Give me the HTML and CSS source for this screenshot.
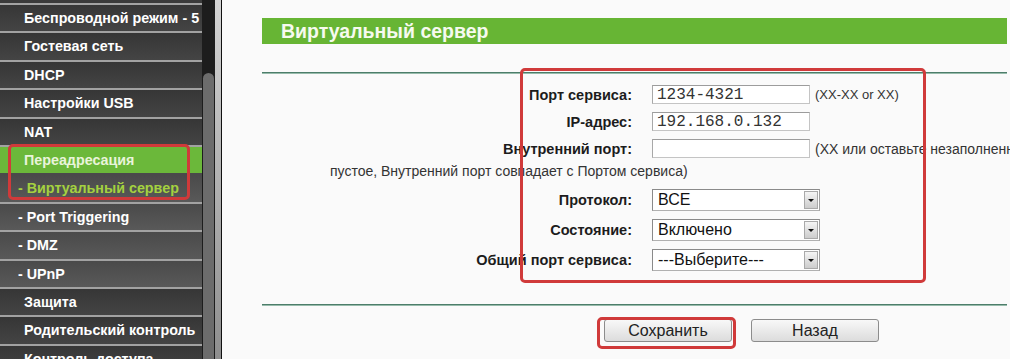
FILE: index.html
```html
<!DOCTYPE html>
<html lang="ru">
<head>
<meta charset="utf-8">
<title>Виртуальный сервер</title>
<link rel="stylesheet" href="styles.css">
</head>
<body>
<div class="page">
  <nav class="sidebar">
    <ul class="menu">
      <li class="item">Беспроводной режим - 5 ГГц</li>
      <li class="item">Гостевая сеть</li>
      <li class="item">DHCP</li>
      <li class="item">Настройки USB</li>
      <li class="item">NAT</li>
      <li class="item parent-active">Переадресация</li>
      <li class="item sub current">- Виртуальный сервер</li>
      <li class="item sub">- Port Triggering</li>
      <li class="item sub">- DMZ</li>
      <li class="item sub">- UPnP</li>
      <li class="item">Защита</li>
      <li class="item">Родительский контроль</li>
      <li class="item">Контроль доступа</li>
    </ul>
    <div class="mark mark-menu"></div>
  </nav>
  <div class="scrollbar"><div class="thumb"></div></div>
  <div class="frame-edge"></div>
  <main class="content">
    <h1 class="title-bar">Виртуальный сервер</h1>
    <div class="rule"></div>
    <form class="form">
      <div class="row">
        <label class="label">Порт сервиса:</label>
        <input class="text" type="text" value="1234-4321">
        <span class="hint hint-latin">(XX-XX or XX)</span>
      </div>
      <div class="row">
        <label class="label">IP-адрес:</label>
        <input class="text" type="text" value="192.168.0.132">
      </div>
      <div class="row">
        <label class="label">Внутренний порт:</label>
        <input class="text" type="text" value="">
        <span class="hint">(XX или оставьте незаполненным поле</span>
      </div>
      <div class="wrap-line">пустое, Внутренний порт совпадает с Портом сервиса)</div>
      <div class="row select-row first">
        <label class="label">Протокол:</label>
        <div class="select"><span class="value">ВСЕ</span><span class="arrow"></span></div>
      </div>
      <div class="row select-row">
        <label class="label">Состояние:</label>
        <div class="select"><span class="value">Включено</span><span class="arrow"></span></div>
      </div>
      <div class="row select-row">
        <label class="label">Общий порт сервиса:</label>
        <div class="select"><span class="value">---Выберите---</span><span class="arrow"></span></div>
      </div>
      <div class="mark mark-form"></div>
    </form>
    <div class="rule rule-bottom"></div>
    <div class="buttons">
      <span class="btn-wrap marked"><button class="btn" type="button">Сохранить</button></span>
      <button class="btn" type="button">Назад</button>
    </div>
  </main>
</div>
</body>
</html>
```

FILE: styles.css
```css
* { box-sizing: border-box; }
html, body { margin: 0; padding: 0; }
body {
  width: 1010px;
  height: 359px;
  overflow: hidden;
  background: #fafafa;
  font-family: "Liberation Sans", Arial, sans-serif;
}
.page {
  display: flex;
  height: 359px;
}

/* sidebar */
.sidebar {
  position: relative;
  width: 202px;
  flex: none;
  background: #3a3a3a;
  padding-top: 3px;
  overflow: hidden;
}
.menu {
  list-style: none;
  margin: 0;
  padding: 0;
}
.item {
  height: 28.42px;
  border-top: 2px solid #a2a2a2;
  background: linear-gradient(#363636, #444444);
  color: #ffffff;
  font-weight: bold;
  font-size: 14.3px;
  line-height: 26.42px;
  padding-left: 24px;
  white-space: nowrap;
  overflow: hidden;
}
.item.sub {
  padding-left: 18px;
  background: linear-gradient(#4a4a4a, #595959);
}
.item.parent-active {
  background: #6bb83a;
  color: #e9f4da;
}
.item.current {
  color: #a4d13f;
  border-top-color: #4a4a4a;
}
.mark {
  position: absolute;
  border: 3px solid #d03a3a;
  border-radius: 5px;
  pointer-events: none;
}
.mark-menu {
  left: 8px;
  top: 144px;
  width: 182px;
  height: 56px;
}

/* scrollbar + frame edge */
.scrollbar {
  width: 13px;
  flex: none;
  background: #1d1d1d;
  padding-top: 73px;
  padding-left: 1px;
  padding-right: 1px;
}
.thumb {
  height: 100%;
  background: #6c6c6c;
  border-radius: 6px 6px 0 0;
}
.frame-edge {
  width: 7px;
  flex: none;
  background: linear-gradient(#d4d4d4, #8e8e8e);
  border-right: 1px solid #111;
}

/* content */
.content {
  flex: 1;
  min-width: 0;
  overflow: hidden;
  padding: 18px 3px 0 40px;
  background: #fafafa;
}
.title-bar {
  margin: 0;
  height: 26px;
  line-height: 26px;
  background: #67b534;
  color: #f6faef;
  font-size: 19.5px;
  font-weight: bold;
  padding-left: 19px;
}
.rule {
  height: 2px;
  margin-top: 28px;
  border-top: 1px solid #4d7d6a;
  border-bottom: 1px solid #97bbab;
}
.rule-bottom {
  margin-top: 29px;
}

.form {
  position: relative;
  margin-top: 7px;
}
.row {
  display: flex;
  align-items: center;
  height: 27px;
  white-space: nowrap;
}
.label {
  width: 370px;
  flex: none;
  text-align: right;
  margin-right: 20px;
  font-size: 14.5px;
  font-weight: bold;
  color: #1c1c1c;
}
.text {
  width: 158px;
  height: 19px;
  flex: none;
  margin: 0;
  padding: 0 4px;
  border: 1px solid #c4c4c4;
  border-top-color: #9c9c9c;
  border-left-color: #a8a8a8;
  background: #ffffff;
  font-family: "Liberation Mono", "Courier New", monospace;
  font-size: 16px;
  color: #333333;
  outline: none;
}
.hint {
  margin-left: 5px;
  font-size: 14px;
  color: #333333;
  white-space: nowrap;
}
.hint-latin {
  font-size: 13px;
}
.wrap-line {
  height: 18px;
  line-height: 18px;
  padding-left: 68px;
  font-size: 14px;
  color: #333333;
  white-space: nowrap;
}
.select-row {
  height: 30px;
}
.select-row.first {
  margin-top: 5px;
}
.select {
  display: flex;
  width: 168px;
  height: 22px;
  flex: none;
  border: 1px solid #8a8a8a;
  border-right-color: #a0a0a0;
  border-bottom-color: #b0b0b0;
  background: #ffffff;
}
.select .value {
  flex: 1;
  padding-left: 5px;
  line-height: 20px;
  font-size: 16px;
  color: #111111;
}
.select .arrow {
  width: 14px;
  margin: 1px;
  border: 1px solid #a9a9a9;
  background: linear-gradient(#f5f5f5, #cdcdcd);
  display: flex;
  align-items: center;
  justify-content: center;
}
.select .arrow::before {
  content: "";
  border-left: 3px solid transparent;
  border-right: 3px solid transparent;
  border-top: 3px solid #111111;
}
.mark-form {
  left: 258px;
  top: -13px;
  width: 406px;
  height: 215px;
}

.buttons {
  display: flex;
  gap: 19px;
  margin-top: 13px;
  padding-left: 342px;
}
.btn-wrap {
  position: relative;
  display: inline-flex;
}
.btn-wrap.marked::after {
  content: "";
  position: absolute;
  left: -7px;
  top: -2px;
  right: -4px;
  bottom: -7px;
  border: 3px solid #d03a3a;
  border-radius: 5px;
  pointer-events: none;
}
.btn {
  width: 128px;
  height: 23px;
  margin: 0;
  padding: 0;
  border: 1px solid #8c8c8c;
  border-radius: 3px;
  background: linear-gradient(#f8f8f8, #dcdcdc);
  font-family: "Liberation Sans", Arial, sans-serif;
  font-size: 16px;
  color: #222222;
}
```
